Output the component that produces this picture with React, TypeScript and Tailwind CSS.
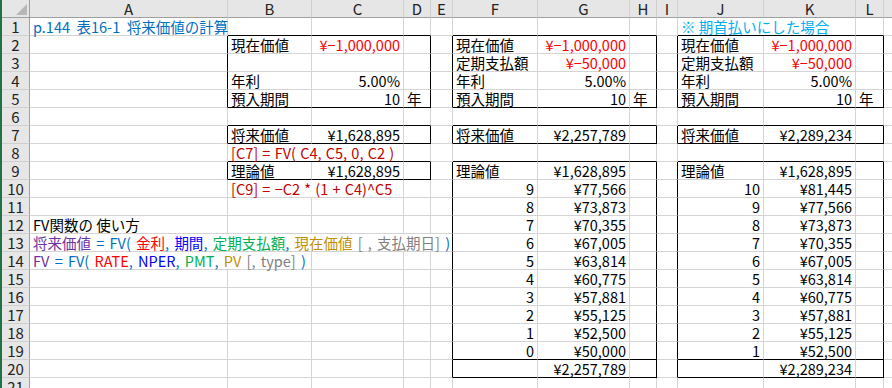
import React from 'react';

type Seg = [string, string];
type Cell = { t?: string; segs?: Seg[]; right?: boolean; color?: string; span?: number; spanCls?: string };

const LETTERS = ['A', 'B', 'C', 'D', 'E', 'F', 'G', 'H', 'I', 'J', 'K', 'L', ''];

// boxes: [c1, c2, r1, r2] (A = 0)
const BOXES = [
  [1, 3, 2, 5], [1, 3, 7, 7], [1, 3, 9, 9],
  [5, 7, 2, 5], [5, 7, 7, 7], [5, 7, 9, 20], [5, 7, 20, 20],
  [9, 11, 2, 5], [9, 11, 7, 7], [9, 11, 9, 20], [9, 11, 20, 20],
];

const RED = 'text-[#ff0000]';
const BLUE = 'text-[#0070c0]';
const PURPLE = 'text-[#7030a0]';
const NAVY = 'text-[#0000ff]';
const GREEN = 'text-[#00b050]';
const GOLD = 'text-[#bf8f00]';
const GRAY = 'text-[#7f7f7f]';
const DARKRED = 'text-[#c00000]';

const cells: Record<string, Cell> = {
  '1,0': { t: 'p.144  表16-1  将来価値の計算', color: BLUE },
  '1,9': { t: '※ 期首払いにした場合', color: 'text-[#00b0f0]', span: 2, spanCls: 'col-span-2' },
  '2,1': { t: '現在価値' }, '2,2': { t: '¥−1,000,000', right: true, color: RED },
  '2,5': { t: '現在価値' }, '2,6': { t: '¥−1,000,000', right: true, color: RED },
  '2,9': { t: '現在価値' }, '2,10': { t: '¥−1,000,000', right: true, color: RED },
  '3,5': { t: '定期支払額' }, '3,6': { t: '¥−50,000', right: true, color: RED },
  '3,9': { t: '定期支払額' }, '3,10': { t: '¥−50,000', right: true, color: RED },
  '4,1': { t: '年利' }, '4,2': { t: '5.00%', right: true },
  '4,5': { t: '年利' }, '4,6': { t: '5.00%', right: true },
  '4,9': { t: '年利' }, '4,10': { t: '5.00%', right: true },
  '5,1': { t: '預入期間' }, '5,2': { t: '10', right: true }, '5,3': { t: '年' },
  '5,5': { t: '預入期間' }, '5,6': { t: '10', right: true }, '5,7': { t: '年' },
  '5,9': { t: '預入期間' }, '5,10': { t: '10', right: true }, '5,11': { t: '年' },
  '7,1': { t: '将来価値' }, '7,2': { t: '¥1,628,895', right: true },
  '7,5': { t: '将来価値' }, '7,6': { t: '¥2,257,789', right: true },
  '7,9': { t: '将来価値' }, '7,10': { t: '¥2,289,234', right: true },
  '8,1': { t: '[C7] = FV( C4, C5, 0, C2 )', color: DARKRED, span: 2, spanCls: 'col-span-2 [word-spacing:1px]' },
  '9,1': { t: '理論値' }, '9,2': { t: '¥1,628,895', right: true },
  '9,5': { t: '理論値' }, '9,6': { t: '¥1,628,895', right: true },
  '9,9': { t: '理論値' }, '9,10': { t: '¥1,628,895', right: true },
  '10,1': { t: '[C9] = −C2 * (1 + C4)^C5', color: DARKRED, span: 2, spanCls: 'col-span-2 [word-spacing:1px]' },
  '12,0': { t: 'FV関数の 使い方' },
  '13,0': {
    span: 5,
    spanCls: 'col-span-5 [word-spacing:2px]',
    segs: [
      ['将来価値', PURPLE], [' = FV( ', BLUE], ['金利', RED], [', ', BLUE], ['期間', NAVY], [', ', BLUE],
      ['定期支払額', GREEN], [', ', BLUE], ['現在価値', GOLD], [' [ , 支払期日] ', GRAY], [')', BLUE],
    ],
  },
  '14,0': {
    span: 2,
    spanCls: 'col-span-2 [word-spacing:2px]',
    segs: [
      ['FV', PURPLE], [' = FV( ', BLUE], ['RATE', RED], [', ', BLUE], ['NPER', NAVY], [', ', BLUE],
      ['PMT', GREEN], [', ', BLUE], ['PV', GOLD], [' [, type] ', GRAY], [')', BLUE],
    ],
  },
  '20,6': { t: '¥2,257,789', right: true },
  '20,10': { t: '¥2,289,234', right: true },
};

const seriesF = ['¥77,566', '¥73,873', '¥70,355', '¥67,005', '¥63,814', '¥60,775', '¥57,881', '¥55,125', '¥52,500', '¥50,000'];
const seriesK = ['¥81,445', '¥77,566', '¥73,873', '¥70,355', '¥67,005', '¥63,814', '¥60,775', '¥57,881', '¥55,125', '¥52,500'];
for (let i = 0; i < 10; i++) {
  const r = 10 + i;
  cells[`${r},5`] = { t: String(9 - i), right: true };
  cells[`${r},6`] = { t: seriesF[i], right: true };
  cells[`${r},9`] = { t: String(10 - i), right: true };
  cells[`${r},10`] = { t: seriesK[i], right: true };
}

const rightBlack = (r: number, c: number) =>
  BOXES.some(([c1, c2, r1, r2]) => r >= r1 && r <= r2 && (c === c2 || c === c1 - 1));
const bottomBlack = (r: number, c: number) =>
  BOXES.some(([c1, c2, r1, r2]) => c >= c1 && c <= c2 && (r === r2 || r === r1 - 1));

function SheetRow({ r }: { r: number }) {
  const out: React.ReactNode[] = [];
  out.push(
    <div key="h" className="flex items-center justify-center border-r border-b border-r-[#9f9f9f] border-b-[#d0d0d0] bg-[#e6e6e6] text-[15px] text-[#222] leading-[17px]">
      {r}
    </div>
  );
  let c = 0;
  while (c < 13) {
    const cell = cells[`${r},${c}`];
    const span = cell?.span ?? 1;
    const last = c + span - 1;
    let bb = false;
    for (let k = c; k <= last; k++) if (bottomBlack(r, k)) bb = true;
    const rb = rightBlack(r, last);
    out.push(
      <div
        key={c}
        className={`flex items-end overflow-visible whitespace-pre border-r border-b px-[3px] text-[14.5px] leading-[17px] ${
          rb ? 'border-r-black' : 'border-r-[#d4d4d4]'
        } ${bb ? 'border-b-black' : 'border-b-[#d4d4d4]'} ${cell?.right ? 'justify-end' : 'justify-start'} ${
          cell?.color ?? 'text-black'
        } ${cell?.spanCls ?? ''}`}
      >
        {cell?.t}
        {cell?.segs?.map(([s, col], i) => (
          <span key={i} className={`whitespace-pre ${col}`}>
            {s}
          </span>
        ))}
      </div>
    );
    c += span;
  }
  return <>{out}</>;
}

export default function App() {
  return (
    <div
      className="h-[388px] w-[892px] overflow-hidden bg-white border-l-2 border-l-[#217346]"
      style={{ fontFamily: '"Noto Sans CJK JP", "Noto Sans", sans-serif' }}
    >
      <div className="grid grid-cols-[28px_198px_84px_92px_27px_22px_85px_92px_27px_21px_86px_92px_28px_60px] auto-rows-[18px]">
        <div className="relative border-r border-b border-r-[#9f9f9f] border-b-[#9f9f9f] bg-[#e6e6e6]">
          <svg className="absolute right-[2px] bottom-[2px]" width="11" height="11" viewBox="0 0 11 11">
            <polygon points="11,0 11,11 0,11" fill="#b7b7b7" />
          </svg>
        </div>
        {LETTERS.map((l, i) => (
          <div
            key={i}
            className="flex items-center justify-center border-r border-b border-r-[#d0d0d0] border-b-[#9f9f9f] bg-[#e6e6e6] text-[15px] text-[#222] leading-[17px]"
          >
            {l}
          </div>
        ))}
        {Array.from({ length: 21 }, (_, i) => (
          <SheetRow key={i} r={i + 1} />
        ))}
      </div>
    </div>
  );
}
